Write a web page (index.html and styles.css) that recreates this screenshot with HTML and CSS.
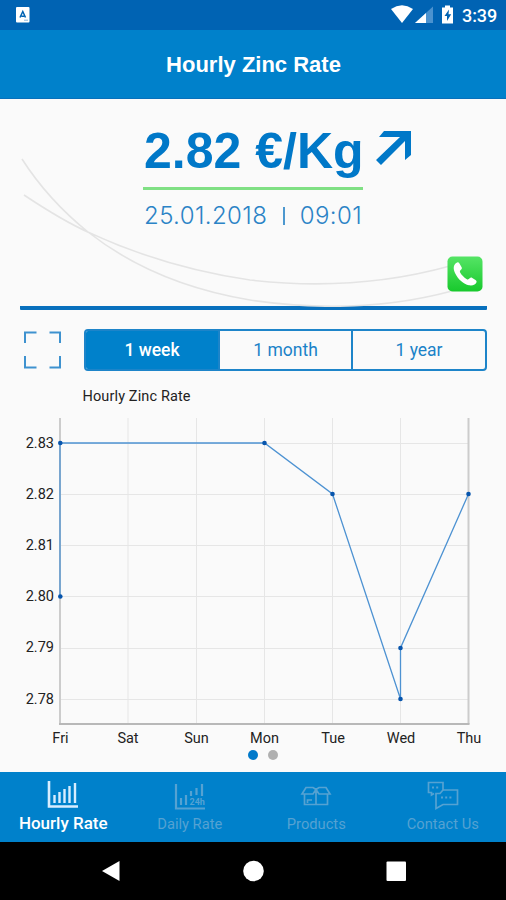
FILE: index.html
```html
<!DOCTYPE html>
<html lang="en">
<head>
<meta charset="utf-8">
<meta name="viewport" content="width=device-width, initial-scale=1">
<title>Hourly Zinc Rate</title>
<link rel="stylesheet" href="styles.css">
</head>
<body>
<div class="status">
  <svg class="status-app" width="14" height="16" viewBox="0 0 14 16"><rect width="13.5" height="15.5" rx="1" fill="#fff"/><path d="M4 10.5 6.800 4.500 9.500 10.500M5.400 9.200H8.200" fill="none" stroke="#0063b3" stroke-width="1.500"/><path d="M8 13.200h4" stroke="#8ab5dc"/></svg>
  <svg class="status-icons" width="66" height="20" viewBox="0 0 66 20"><path d="M0 4Q11-3.400 22 4L11 18Z" fill="#fff"/><path d="M42 1.500V18H24Z" fill="#4b92cf"/><path d="M35 8V18H24Z" fill="#fff"/><path d="M51 2.500h3V.5h5v2h3V18.500H51Z" fill="#fff"/><path d="M58 4.500 53.500 11H56v5l4.200-6.800H57.500Z" fill="#0063b3"/></svg>
  <span class="clock">3:39</span>
</div>
<header class="bar"><h1>Hourly Zinc Rate</h1></header>
<main>
  <section class="hero">
    <svg class="curves" width="506" height="208" viewBox="0 99 506 208"><path d="M22 159C38 184 62 211 88 232C135 269 190 290 250 300C318 310 385 309 452 291M24 195C45 209 65 222 90 233C140 256 195 272 250 280C320 288 385 284 450 266"/></svg>
    <div class="quote">
      <div class="price">2.82 €/Kg</div>
      <svg class="trend" width="36" height="36" viewBox="0 0 36 36"><path d="M8 0H35V24L29 29V10L5 34 0 29 24 6H3Z" fill="#0078c8"/></svg>
      <div class="stamp"><span>25.01.2018</span><i></i><span>09:01</span></div>
    </div>
    <svg class="phone" width="36" height="36" viewBox="0 0 36 36"><defs><linearGradient id="call" x2="0" y2="1"><stop stop-color="#55e465"/><stop offset="1" stop-color="#18c92d"/></linearGradient></defs><rect x=".5" y=".5" width="35" height="35" rx="5" fill="url(#call)"/><path d="M9.200 7C6.500 8.800 5.900 12.500 8 17C11 23.500 16.500 28 22 29.300C26 30 28.800 28.200 29.500 26.200C29.800 25.200 29.400 24.600 28.500 24L25.300 22C24.200 21.300 23.500 21.500 22.700 22.300C21.700 23.400 21 24 19.500 23C17 21.500 14.500 18.800 13.300 16.700C12.500 15.200 13 14.700 14.200 13.500C15 12.700 15.100 12 14.500 11L12.300 7.300C11.500 6 10.500 6 9.200 7Z" fill="#fff"/></svg>
  </section>
  <div class="controls">
    <svg width="38" height="38" viewBox="0 0 38 38"><path d="M1 12V1.500H12.500M25.500 1.500H36V12M36 25V36.500H25.500M12.500 36.500H1V25" fill="none" stroke="#3e92cf" stroke-width="2"/></svg>
    <div class="tabs"><span class="tab on">1 week</span><span class="tab">1 month</span><span class="tab">1 year</span></div>
  </div>
  <svg class="chart" width="506" height="364" viewBox="0 384 506 364">
    <text x="82.500" y="401" textLength="108">Hourly Zinc Rate</text>
    <path class="grid" d="M128 418V724M196.500 418V724M264.500 418V724M332.500 418V724M400.500 418V724M60 443.500H469M60 494.500H469M60 545.500H469M60 596.500H469M60 648.500H469M60 699.500H469"/>
    <path class="side" d="M60 418V724M468.500 418V724"/>
    <path class="base" d="M59 724H469.500"/>
    <path class="line" d="M60 596.500V443H264.500L332.500 494 400.500 699V648L468.500 494"/>
    <g class="dots"><circle cx="60.300" cy="443" r="2.300"/><circle cx="60.300" cy="596.500" r="2.300"/><circle cx="264.500" cy="443" r="2.300"/><circle cx="332.500" cy="494" r="2.300"/><circle cx="400.500" cy="699" r="2.300"/><circle cx="400.500" cy="648" r="2.300"/><circle cx="468.500" cy="494" r="2.300"/></g>
    <g class="ylab"><text x="54" y="447.500">2.83</text><text x="54" y="498.500">2.82</text><text x="54" y="550">2.81</text><text x="54" y="601">2.80</text><text x="54" y="652">2.79</text><text x="54" y="703.500">2.78</text></g>
    <g class="xlab"><text x="60.500" y="743">Fri</text><text x="128" y="743">Sat</text><text x="196.500" y="743">Sun</text><text x="264.500" y="743">Mon</text><text x="333" y="743">Tue</text><text x="401" y="743">Wed</text><text x="469" y="743">Thu</text></g>
  </svg>
  <div class="pager"><i class="cur"></i><i></i></div>
</main>
<nav class="nav">
  <a class="item active"><svg width="32" height="30" viewBox="0 0 32 30"><path d="M2 1V26.500H31" stroke-width="2.600"/><path d="M7.500 15V23M12.500 12V23M17.500 9V23M22.500 6V23M28 3V23" stroke-width="2.400"/></svg><span>Hourly Rate</span></a>
  <a class="item"><svg width="32" height="30" viewBox="0 0 32 30"><path d="M2 4V28.500H31" stroke-width="2.200"/><path d="M7 18V25M12 15V25M17 11V16M22.500 8V15M28 4V16" stroke-width="2.200"/><text x="15.500" y="24.500">24h</text></svg><span>Daily Rate</span></a>
  <a class="item"><svg width="32" height="30" viewBox="0 0 32 30"><path d="M6 7.500H13L16 9.500 19 7.500H26L30 14H19L16 9.500 13 14H2ZM4.500 14V24.500H27.500V14M16 9V24.500M7.500 23V20H12" stroke-width="1.700"/></svg><span>Products</span></a>
  <a class="item"><svg width="32" height="30" viewBox="0 0 32 30"><path d="M16 10V2.500H1.500V12.500H4.500V15L7 13.500M16 10H30.500V24.500H16L9 28.500V13.500H13L16 10" stroke-width="1.700"/><path d="M5 7.500H13M14 17.500H26" stroke-width="1.800" stroke-dasharray="2 2.200"/></svg><span>Contact Us</span></a>
</nav>
<div class="system">
  <svg width="506" height="58" viewBox="0 842 506 58"><path d="M102 871 119.500 861V881Z"/><circle cx="253.500" cy="871" r="10.300"/><rect x="386.500" y="861.500" width="19.500" height="19.500" rx="1"/></svg>
</div>
</body>
</html>
```
FILE: styles.css
```css
* { box-sizing: border-box; }
body { margin: 0; width: 506px; height: 900px; display: flex; flex-direction: column; overflow: hidden; background: #fafafa; font-family: Roboto, sans-serif; }
svg { display: block; flex: none; }
.status { height: 30px; background: #0063b3; display: flex; align-items: center; padding: 0 9px 0 16px; color: #fff; }
.status-icons { margin-left: auto; margin-right: 5px; }
.clock { font-size: 18px; line-height: 30px; font-weight: 500; width: 35px; padding-top: 2px; letter-spacing: -.1px; }
.bar { height: 69px; background: #0081cb; border-bottom: 1px solid #0870bb; display: flex; align-items: center; justify-content: center; }
.bar h1 { margin: 2px 0 0 1px; color: #fff; font: bold 22px/30px "Liberation Sans", sans-serif; }
main { height: 673px; }
.hero { position: relative; height: 211px; margin: 0 19px 0 20px; border-bottom: 4px solid #0870bd; border-radius: 1px; }
.curves { position: absolute; left: -20px; top: 0; fill: none; stroke: #e4e4e4; stroke-width: 1.6; }
.quote { position: relative; display: grid; grid-template-columns: 220px 36px; column-gap: 13px; padding: 24px 0 0 123px; color: #0078c8; }
.price { height: 67px; border-bottom: 3px solid #80e084; font: bold 50px/56px "Liberation Sans", sans-serif; white-space: nowrap; padding-left: 1px; }
.trend { margin-top: 8px; }
.stamp { display: flex; align-items: center; grid-column: 1 / -1; font: 300 24px/30px Inter, sans-serif; letter-spacing: .4px; padding: 11px 0 0 1px; color: #2b83c6; white-space: nowrap; }
.stamp i { width: 1.500px; height: 18px; background: #4d98cf; margin: 0 15px 0 16px; }
.phone { position: absolute; left: 427px; top: 157px; }
.controls { display: flex; align-items: center; gap: 22px; padding: 19px 19px 0 24px; }
.tabs { flex: 1; height: 42px; display: grid; grid-template-columns: 132px 133px 1fr; border: 2px solid #1d84c9; border-radius: 4px; overflow: hidden; }
.tab { display: flex; align-items: center; justify-content: center; font-size: 17.500px; color: #1b82c8; border-left: 2px solid #1d84c9; }
.tab.on { background: #0081cb; color: #fff; font-weight: 500; border-left: 0; }
.chart { margin-top: 13px; font: 14.500px Roboto, sans-serif; fill: #222; }
.grid { stroke: #e6e6e6; }
.side { stroke: #ccc; stroke-width: 2; }
.base { stroke: #b8b8b8; stroke-width: 2; }
.line { fill: none; stroke: #4d92d2; stroke-width: 1.3; }
.dots { fill: #0755ad; }
.ylab { text-anchor: end; }
.xlab { text-anchor: middle; }
.pager { display: flex; justify-content: center; gap: 10px; padding: 2px 0 0 20px; }
.pager i { width: 10px; height: 10px; border-radius: 50%; background: #b0b0b0; }
.pager .cur { background: #0079ca; }
.nav { height: 70px; background: #0081cb; display: grid; grid-template-columns: repeat(4, 126.500px); }
.item { display: flex; flex-direction: column; align-items: center; padding-top: 8px; color: #55a2d2; font-size: 14.700px; }
.item svg { fill: none; stroke: currentColor; }
.item text { font: bold 9px Roboto, sans-serif; fill: currentColor; stroke: none; }
.item span { line-height: 20px; margin-top: 4px; }
.item.active { color: #fff; font-size: 17px; font-weight: 500; }
.item.active svg { color: #d7edff; }
.item.active span { margin-top: 3px; }
.system { height: 58px; background: #000; fill: #fff; }
```
